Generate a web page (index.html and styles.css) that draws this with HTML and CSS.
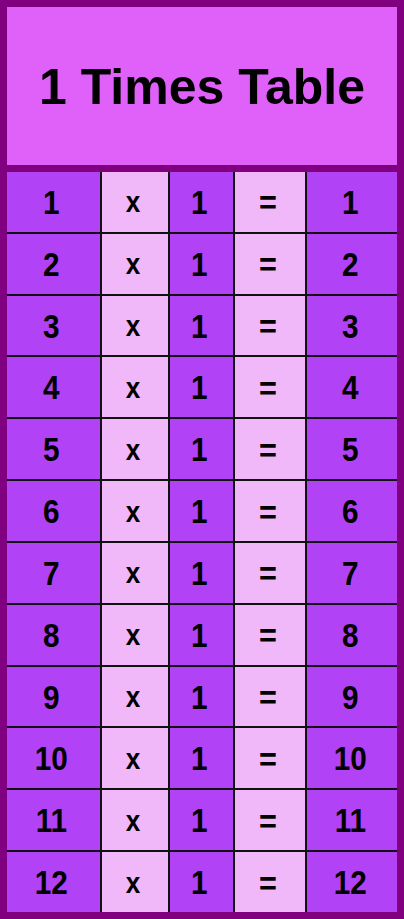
FILE: index.html
```html
<!DOCTYPE html>
<html>
<head>
<meta charset="utf-8">
<link rel="stylesheet" href="styles.css">
</head>
<body>
<div class="frame">
  <div class="title">1 Times Table</div>
  <div class="table">
    <div class="c dark"><span>1</span></div><div class="c light op"><span>x</span></div><div class="c dark"><span>1</span></div><div class="c light eq"><span>=</span></div><div class="c dark"><span>1</span></div>
    <div class="c dark"><span>2</span></div><div class="c light op"><span>x</span></div><div class="c dark"><span>1</span></div><div class="c light eq"><span>=</span></div><div class="c dark"><span>2</span></div>
    <div class="c dark"><span>3</span></div><div class="c light op"><span>x</span></div><div class="c dark"><span>1</span></div><div class="c light eq"><span>=</span></div><div class="c dark"><span>3</span></div>
    <div class="c dark"><span>4</span></div><div class="c light op"><span>x</span></div><div class="c dark"><span>1</span></div><div class="c light eq"><span>=</span></div><div class="c dark"><span>4</span></div>
    <div class="c dark"><span>5</span></div><div class="c light op"><span>x</span></div><div class="c dark"><span>1</span></div><div class="c light eq"><span>=</span></div><div class="c dark"><span>5</span></div>
    <div class="c dark"><span>6</span></div><div class="c light op"><span>x</span></div><div class="c dark"><span>1</span></div><div class="c light eq"><span>=</span></div><div class="c dark"><span>6</span></div>
    <div class="c dark"><span>7</span></div><div class="c light op"><span>x</span></div><div class="c dark"><span>1</span></div><div class="c light eq"><span>=</span></div><div class="c dark"><span>7</span></div>
    <div class="c dark"><span>8</span></div><div class="c light op"><span>x</span></div><div class="c dark"><span>1</span></div><div class="c light eq"><span>=</span></div><div class="c dark"><span>8</span></div>
    <div class="c dark"><span>9</span></div><div class="c light op"><span>x</span></div><div class="c dark"><span>1</span></div><div class="c light eq"><span>=</span></div><div class="c dark"><span>9</span></div>
    <div class="c dark"><span>10</span></div><div class="c light op"><span>x</span></div><div class="c dark"><span>1</span></div><div class="c light eq"><span>=</span></div><div class="c dark"><span>10</span></div>
    <div class="c dark"><span>11</span></div><div class="c light op"><span>x</span></div><div class="c dark"><span>1</span></div><div class="c light eq"><span>=</span></div><div class="c dark"><span>11</span></div>
    <div class="c dark"><span>12</span></div><div class="c light op"><span>x</span></div><div class="c dark"><span>1</span></div><div class="c light eq"><span>=</span></div><div class="c dark"><span>12</span></div>
  </div>
</div>
</body>
</html>
```
FILE: styles.css
```css
html, body {
  margin: 0;
  padding: 0;
}
body {
  font-family: "Liberation Sans", Arial, sans-serif;
  font-weight: bold;
  color: #000;
}
.frame {
  width: 404px;
  height: 919px;
  box-sizing: border-box;
  background: #800080;
  padding: 7px;
  display: flex;
  flex-direction: column;
}
.title {
  height: 158px;
  background: #e060fa;
  display: flex;
  align-items: center;
  justify-content: center;
  font-size: 50px;
  margin-bottom: 7px;
  padding-top: 2px;
  box-sizing: border-box;
}
.table {
  flex: 1;
  display: grid;
  grid-template-columns: 93px 66px 63px 70px 90px;
  grid-template-rows: repeat(12, 1fr);
  gap: 2px;
  background: #111;
}
.c {
  display: flex;
  align-items: center;
  justify-content: center;
  font-size: 33px;
  padding-top: 2px;
  padding-right: 4px;
  box-sizing: border-box;
}
.c span {
  display: inline-block;
  transform: scaleX(0.9);
}
.dark {
  background: #b142f6;
}
.light {
  background: #f0b8f8;
}
.op {
  font-size: 29px;
}
.eq {
  font-size: 34px;
}
```
